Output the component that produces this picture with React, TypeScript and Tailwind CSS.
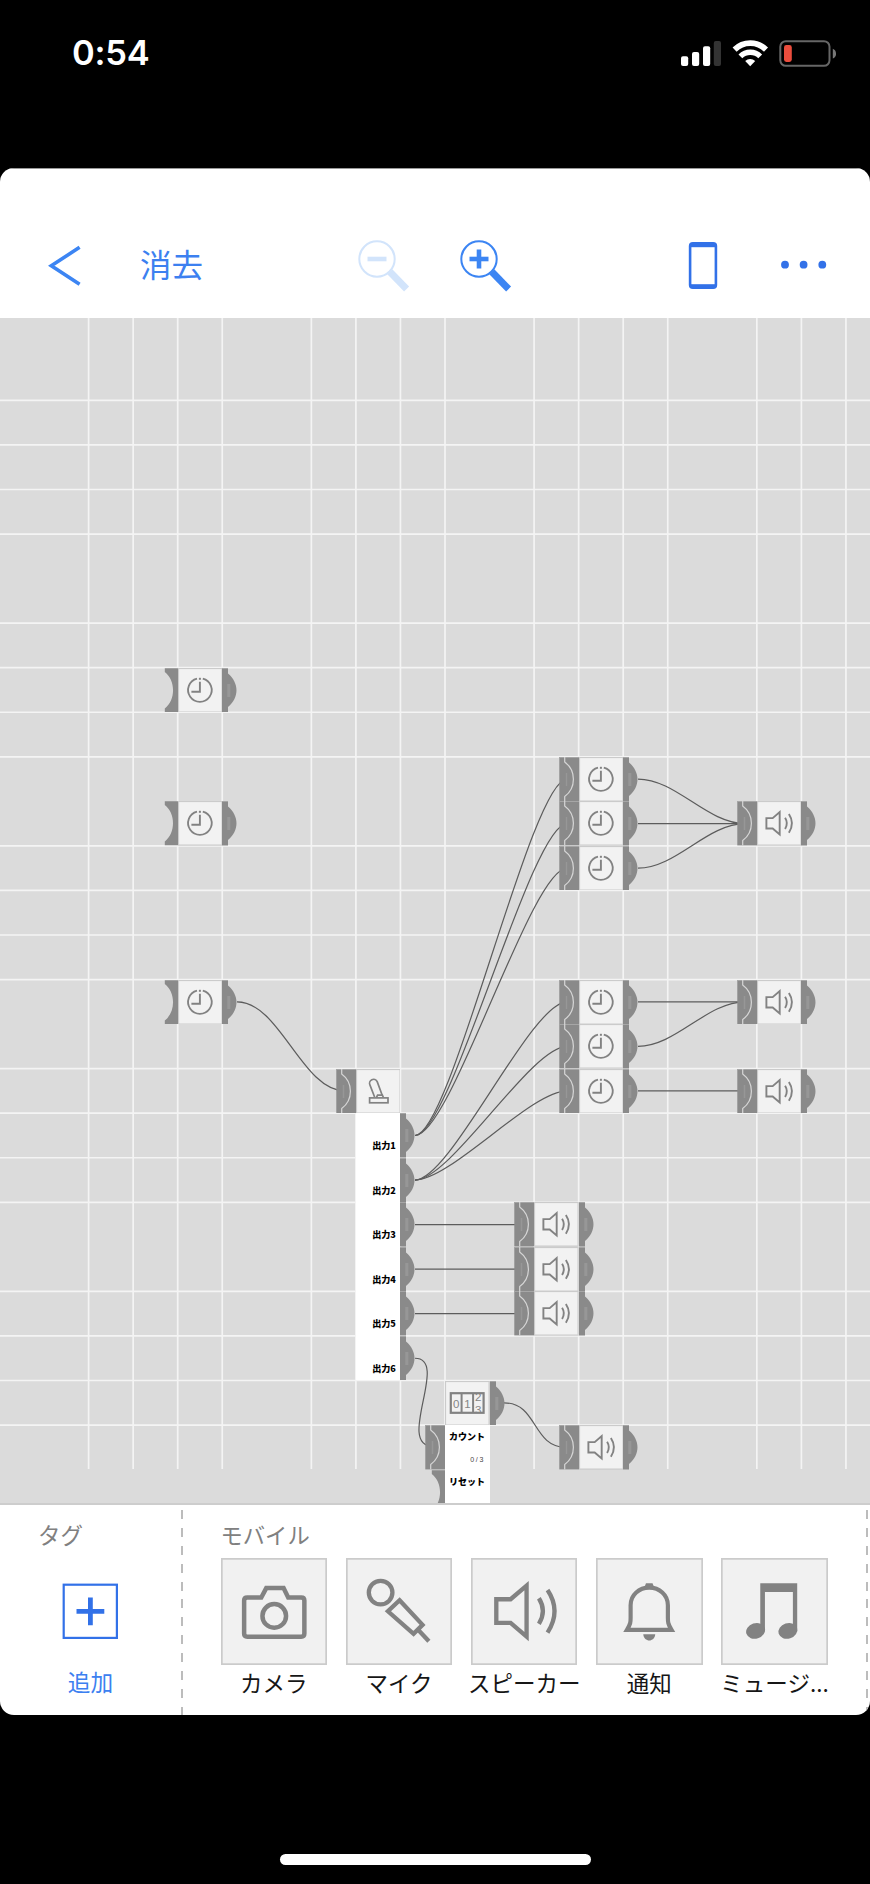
import React from "react";

const STEP = 44.55;
const TOP = 318;
const colX = (c: number) => 88.6 + STEP * c;
const rowY = (r: number) => 400.4 + STEP * r;
const midY = (r: number) => rowY(r) + STEP / 2;

type Kind = "clock" | "speaker" | "switch" | "counter";
type Input = "open" | "linked" | "none";
type Output = "yes" | "none";
type BlockData = { col: number; row: number; kind: Kind; input: Input; output: Output };

const blocks: BlockData[] = [
  { col: 2, row: 6, kind: "clock", input: "open", output: "yes" },
  { col: 2, row: 9, kind: "clock", input: "open", output: "yes" },
  { col: 2, row: 13, kind: "clock", input: "open", output: "yes" },
  { col: 11, row: 8, kind: "clock", input: "linked", output: "yes" },
  { col: 11, row: 9, kind: "clock", input: "linked", output: "yes" },
  { col: 11, row: 10, kind: "clock", input: "linked", output: "yes" },
  { col: 11, row: 13, kind: "clock", input: "linked", output: "yes" },
  { col: 11, row: 14, kind: "clock", input: "linked", output: "yes" },
  { col: 11, row: 15, kind: "clock", input: "linked", output: "yes" },
  { col: 15, row: 9, kind: "speaker", input: "linked", output: "yes" },
  { col: 15, row: 13, kind: "speaker", input: "linked", output: "yes" },
  { col: 15, row: 15, kind: "speaker", input: "linked", output: "yes" },
  { col: 10, row: 18, kind: "speaker", input: "linked", output: "yes" },
  { col: 10, row: 19, kind: "speaker", input: "linked", output: "yes" },
  { col: 10, row: 20, kind: "speaker", input: "linked", output: "yes" },
  { col: 11, row: 23, kind: "speaker", input: "linked", output: "yes" },
  { col: 6, row: 15, kind: "switch", input: "linked", output: "none" },
  { col: 8, row: 22, kind: "counter", input: "none", output: "yes" },
];

const wire = (x1: number, y1: number, x2: number, y2: number, c = 38) =>
  `M${x1} ${y1}C${x1 + c} ${y1} ${x2 - c} ${y2} ${x2} ${y2}`;

const wires: string[] = [
  wire(237, midY(13), 345, midY(15), 43),
  ...[8, 9, 10].map((r) => wire(415, midY(16), 567, midY(r), 36)),
  ...[13, 14, 15].map((r) => wire(415, midY(17), 567, midY(r), 36)),
  ...[18, 19, 20].map((r) => wire(415, midY(r), 520, midY(r))),
  wire(638, midY(8), 745, midY(9)),
  wire(638, midY(9), 745, midY(9)),
  wire(638, midY(10), 745, midY(9)),
  wire(638, midY(13), 745, midY(13)),
  wire(638, midY(14), 745, midY(13)),
  wire(638, midY(15), 745, midY(15)),
  `M415 ${midY(21)}C450 ${midY(21)} 395 ${midY(23) - 1} 433 ${midY(23) - 1}`,
  wire(504, midY(22), 566, midY(23), 34),
];

const gridCols = Array.from({ length: 18 }, (_, i) => i).filter((i) => i % 5 !== 4);
const gridRows = Array.from({ length: 24 }, (_, i) => i).filter((i) => i % 5 !== 4);

function Grid() {
  return (
    <svg className="absolute inset-0" width="870" height="1187" viewBox="0 318 870 1187">
      <g stroke="#f4f4f4" strokeWidth="1.7">
        {gridCols.map((c) => (
          <line key={`c${c}`} x1={colX(c)} x2={colX(c)} y1={318} y2={1469} />
        ))}
        {gridRows.map((r) => (
          <line key={`r${r}`} x1={0} x2={870} y1={rowY(r)} y2={rowY(r)} />
        ))}
      </g>
      <g stroke="#5c5c5c" strokeWidth="1.2" fill="none">
        {wires.map((d) => (
          <path key={d} d={d} />
        ))}
      </g>
    </svg>
  );
}

/* Connector shapes: 44.55 tall, placed beside a block */
function OpenInput() {
  return (
    <svg width="14" height="44.5" viewBox="0 0 14 44.5" className="block">
      <path d="M0.8 .3H14V44.2H.8V40.5C11.8 32 11.8 12.5 .8 4Z" fill="#8a8a8a" />
    </svg>
  );
}

function LinkedInput() {
  return (
    <svg width="20" height="44.5" viewBox="0 0 20 44.5" className="block">
      <rect x="0.3" y=".2" width="19.7" height="44.2" fill="#8a8a8a" />
      <path d="M0 .5H20" stroke="#a6a6a6" strokeWidth="1" />
      <path d="M5.7 0V5C17.3 13.5 17.3 31 5.7 39.5V44.5" stroke="#d6d6d6" strokeWidth="1.2" fill="none" />
      <path d="M7.5 16V29" stroke="#979797" strokeWidth="1.4" />
    </svg>
  );
}

function OutputBump() {
  return (
    <svg width="16" height="44.5" viewBox="0 0 16 44.5" className="block">
      <path d="M0 .2H6V5.4C17.3 15 17.3 29.5 6 39.1V44.4H0Z" fill="#8a8a8a" />
      <path d="M0 .5H6" stroke="#a6a6a6" strokeWidth="1" />
      <path d="M6.8 16V29" stroke="#979797" strokeWidth="3" />
    </svg>
  );
}

function ClockGlyph() {
  return (
    <g fill="none" stroke="#828282">
      <path d="M19 10.6A11.8 11.8 0 1 0 24.8 10.6" strokeWidth="1.8" />
      <path d="M21.9 13.8V23.7H13.4" strokeWidth="1.9" />
      <path d="M20.9 10.8H22.9" strokeWidth="2" />
    </g>
  );
}

function SpeakerShape() {
  return (
    <>
      <path d="M76 124H119L167 83V236L119 195H76Z" strokeWidth="13" strokeMiterlimit="8" />
      <path d="M204 121Q228 159 204 198" strokeWidth="13" />
      <path d="M230 96Q272 159 230 224" strokeWidth="13" />
    </>
  );
}

function SpeakerGlyph() {
  return (
    <g transform="translate(-1.7 -1) scale(.146)" fill="none" stroke="#828282">
      <SpeakerShape />
    </g>
  );
}

function SwitchGlyph() {
  return (
    <g fill="#f2f2f2" stroke="#828282" strokeWidth="1.7">
      <path d="M18.6 28L14 16.2A3.9 3.9 0 0 1 21.2 12.6L26.2 26.2" />
      <path d="M20.4 28.5L21.6 26.2H26.4L27.4 28.5" />
      <rect x="13.6" y="28.9" width="18.4" height="4.9" />
    </g>
  );
}

function CounterGlyph() {
  return (
    <g>
      <clipPath id="counter-wheel">
        <rect x="29" y="12.5" width="9.5" height="19" />
      </clipPath>
      <rect x="5.8" y="12.2" width="32.8" height="19.6" fill="none" stroke="#828282" strokeWidth="2.2" />
      <path d="M16.6 12V32M28.1 12V32" stroke="#828282" strokeWidth="2" />
      <g
        className="font-['Liberation_Sans']"
        fontSize="11.5"
        fill="#858585"
        textAnchor="middle"
      >
        <text x="11.2" y="26.5">0</text>
        <text x="22.4" y="26.5">1</text>
        <g clipPath="url(#counter-wheel)">
          <text x="33.3" y="20.2">2</text>
          <text x="33.3" y="33">3</text>
        </g>
      </g>
    </g>
  );
}

function Block({ col, row, kind, input, output }: BlockData) {
  const inputWidth = input === "open" ? 14 : input === "linked" ? 20 : 0;
  return (
    <div className="absolute flex" style={{ left: colX(col) - inputWidth, top: rowY(row) - TOP }}>
      {input === "open" && <OpenInput />}
      {input === "linked" && <LinkedInput />}
      <svg width="44.5" height="44.5" viewBox="0 0 44.5 44.5" className="block">
        <rect x=".5" y=".5" width="43.6" height="43.6" fill="#f2f2f2" stroke="#cbcbcb" strokeWidth="1.2" />
        {kind === "clock" && <ClockGlyph />}
        {kind === "speaker" && <SpeakerGlyph />}
        {kind === "switch" && <SwitchGlyph />}
        {kind === "counter" && <CounterGlyph />}
      </svg>
      {output === "yes" && <OutputBump />}
    </div>
  );
}

function SwitchOutputs() {
  return (
    <div className="absolute" style={{ left: colX(6), top: rowY(16) - TOP }}>
      {[1, 2, 3, 4, 5, 6].map((n) => (
        <div key={n} className="flex h-[44.55px]">
          <div className="flex w-[44.5px] items-end justify-end bg-white pr-[4.5px] pb-[5.5px] text-[9.1px] leading-[13px] font-black text-black">
            出力{n}
          </div>
          <OutputBump />
        </div>
      ))}
    </div>
  );
}

function CounterInputs() {
  return (
    <div className="absolute flex items-start" style={{ left: colX(8) - 20, top: rowY(23) - TOP }}>
      <div className="flex w-[20px] flex-col items-end">
        <LinkedInput />
        <OpenInput />
      </div>
      <div className="h-[78px] w-[45px] overflow-hidden bg-white pr-[5px] text-right text-[9px] font-black text-black">
        <div className="pt-[5px] leading-[14px]">カウント</div>
        <div className="pt-[11px] font-['Liberation_Sans'] text-[7px] leading-[10px] font-normal tracking-[1.7px] text-[#444]">0/3</div>
        <div className="pt-[10px] leading-[14px]">リセット</div>
      </div>
    </div>
  );
}

function StatusBar() {
  return (
    <div className="flex h-[168px] items-start justify-between pt-[32px] pr-[34px] pl-[72px]">
      <div className="font-['Inter'] text-[34.5px] leading-[42px] font-semibold tracking-[-0.2px] text-white">0:54</div>
      <div className="pt-[8px]">
        <svg width="156" height="28" viewBox="680 40 156 28" className="block">
          <g fill="#fff">
            <rect x="681" y="56.2" width="7.2" height="9.8" rx="2" />
            <rect x="692" y="52" width="7.2" height="14" rx="2" />
            <rect x="703" y="46.2" width="7.2" height="19.8" rx="2" />
            <rect x="713.8" y="41" width="7.2" height="25" rx="2" fill="#333" />
          </g>
          <g fill="none" stroke="#fff">
            <path d="M734.6 49.6A22.5 22.5 0 0 1 766 49.6" strokeWidth="5.8" />
            <path d="M740.4 56.4A14 14 0 0 1 760.2 56.4" strokeWidth="5.4" />
          </g>
          <path d="M745.2 61A7.4 7.4 0 0 1 755.2 61L750.2 66.2Z" fill="#fff" />
          <rect x="780.3" y="41.2" width="49.2" height="24.6" rx="5.5" fill="none" stroke="#666" strokeWidth="2" />
          <rect x="784" y="45" width="7.8" height="17" rx="2.4" fill="#eb4d3d" />
          <path d="M832.8 48.8C837.2 50.6 837.2 56.8 832.8 58.6Z" fill="#777" />
        </svg>
      </div>
    </div>
  );
}

function Magnifier({ plus }: { plus: boolean }) {
  return (
    <svg width="54" height="54" viewBox="-20 -20 54 54" className="block">
      <g fill="none" stroke={plus ? "#3c85f3" : "#d2e4fb"}>
        <circle cx="0" cy="0" r="17.700" strokeWidth="2" />
        <path d="M-9.5 0H9.5" strokeWidth="4.6" />
        {plus && <path d="M0 -9.5V9.5" strokeWidth="4.6" />}
        <path d="M12.8 12.8L29.6 30" strokeWidth="7" />
      </g>
    </svg>
  );
}

function Header() {
  return (
    <div className="h-[150px] border-t border-[#999] bg-white">
      <div className="mt-[70px] flex h-[58px] items-start pl-[48px]">
        <svg width="34" height="42" viewBox="48 245 34 42" className="mt-[6px] block">
          <path d="M79.6 247.3L51.3 265.8L79.6 284.3" fill="none" stroke="#3c85f3" strokeWidth="3.6" />
        </svg>
        <div className="ml-[58px] w-[64px] pt-[3px] text-[31.5px] leading-[42px] text-[#3c80f0]">消去</div>
        <div className="ml-[153px]"><Magnifier plus={false} /></div>
        <div className="ml-[48px]"><Magnifier plus /></div>
        <svg width="30" height="50" viewBox="688 241 30 50" className="mt-[2px] ml-[175px] block">
          <rect x="688.8" y="242" width="28.4" height="47" rx="4" fill="#3271e8" />
          <rect x="691.4" y="247.2" width="23.2" height="37" fill="#fff" />
        </svg>
        <svg width="48" height="10" viewBox="780 260 48 10" className="mt-[21px] ml-[62px] block" fill="#3271e8">
          <circle cx="785" cy="264.7" r="3.9" />
          <circle cx="803.6" cy="264.7" r="3.9" />
          <circle cx="822.3" cy="264.7" r="3.9" />
        </svg>
      </div>
    </div>
  );
}

type ToolIcon = "camera" | "mic" | "speaker" | "bell" | "music";

function ToolDrawing({ icon }: { icon: ToolIcon }) {
  return (
    <svg width="106.500" height="106.500" viewBox="0 0 320 320" className="block" fill="none" stroke="#828282" strokeWidth="13.500">
      {icon === "camera" && (
        <>
          <path d="M79 118.500H121L136 90.500H188L202 118.500H241Q250.500 118.500 250.500 128V227Q250.500 236.500 241 236.500H79Q69.500 236.500 69.500 227V128Q69.500 118.500 79 118.500Z" />
          <circle cx="160" cy="174" r="35.500" />
        </>
      )}
      {icon === "mic" && (
        <>
          <circle cx="104" cy="104" r="35.500" strokeWidth="13" />
          <path d="M161 127L230 201L203 228L126 160Z" strokeWidth="13" />
          <path d="M216 215L249 250" strokeWidth="13" />
        </>
      )}
      {icon === "speaker" && <SpeakerShape />}
      {icon === "bell" && (
        <>
          <path d="M93 216C104 198 104 192 104 180V142C104 110 130 89 160 89C190 89 216 110 216 142V180C216 192 216 198 227 216Z" strokeWidth="12.500" />
          <path d="M145 90L150 76H170L175 90Z" fill="#828282" stroke="none" />
          <path d="M142 229H178C176 254 144 254 142 229Z" fill="#828282" stroke="none" />
        </>
      )}
      {icon === "music" && (
        <g fill="#828282" stroke="none">
          <path d="M118 76H229V220H216V102H132V220H118Z" />
          <ellipse cx="104" cy="219" rx="29" ry="23" transform="rotate(-18 104 219)" />
          <ellipse cx="201" cy="219" rx="29" ry="23" transform="rotate(-18 201 219)" />
        </g>
      )}
    </svg>
  );
}

const tools: { icon: ToolIcon; label: string }[] = [
  { icon: "camera", label: "カメラ" },
  { icon: "mic", label: "マイク" },
  { icon: "speaker", label: "スピーカー" },
  { icon: "bell", label: "通知" },
  { icon: "music", label: "ミュージ..." },
];

function Dashes() {
  return (
    <div className="mt-[5px] h-[206px] w-[2px] shrink-0 bg-[repeating-linear-gradient(to_bottom,#bcbcbc_0_9px,transparent_9px_17.9px)]" />
  );
}

function Palette() {
  return (
    <div className="flex h-[210px] bg-white">
      <div className="flex w-[181px] shrink-0 flex-col">
        <div className="pt-[13px] pl-[38px] text-[22.500px] leading-[32px] text-[#808080]">タグ</div>
        <svg width="56" height="56" viewBox="0 0 56 56" className="mt-[33px] ml-[62px] block" fill="none" stroke="#3271e8">
          <rect x="1.700" y="1.700" width="53.200" height="53.200" strokeWidth="2.200" />
          <path d="M14.500 28.300H42.300M28.400 14.400V42.200" strokeWidth="4.800" />
        </svg>
        <div className="mt-[27px] w-[181px] text-center text-[22.700px] leading-[32px] text-[#3c80f0]">追加</div>
      </div>
      <Dashes />
      <div className="w-[683px] shrink-0 pl-[37.500px]">
        <div className="pt-[13px] text-[22.300px] leading-[32px] text-[#808080]">モバイル</div>
        <div className="mt-[8px] flex gap-[18.700px]">
          {tools.map((t) => (
            <div key={t.icon} className="flex w-[106.500px] shrink-0 flex-col items-center">
              <div className="size-[106.500px] bg-[#f1f1f1] shadow-[inset_0_0_0_1.700px_#cbcbcb]">
                <ToolDrawing icon={t.icon} />
              </div>
              <div className="mt-[1.500px] text-[22.500px] leading-[32px] whitespace-nowrap text-[#161616]">{t.label}</div>
            </div>
          ))}
        </div>
      </div>
      <Dashes />
    </div>
  );
}

export default function App() {
  return (
    <div className="flex h-[1884px] w-[870px] flex-col bg-black font-['Noto_Sans_CJK_JP',sans-serif]">
      <StatusBar />
      <div className="overflow-hidden rounded-[14px]">
        <Header />
        <div className="relative h-[1187px] overflow-hidden border-b-2 border-[#cdcdcd] bg-[#dbdbdb]">
          <Grid />
          <SwitchOutputs />
          <CounterInputs />
          {blocks.map((b) => (
            <Block key={`${b.col}-${b.row}`} {...b} />
          ))}
        </div>
        <Palette />
      </div>
      <div className="flex flex-1 items-end justify-center pb-[19px]">
        <div className="h-[11px] w-[311px] rounded-full bg-white" />
      </div>
    </div>
  );
}
